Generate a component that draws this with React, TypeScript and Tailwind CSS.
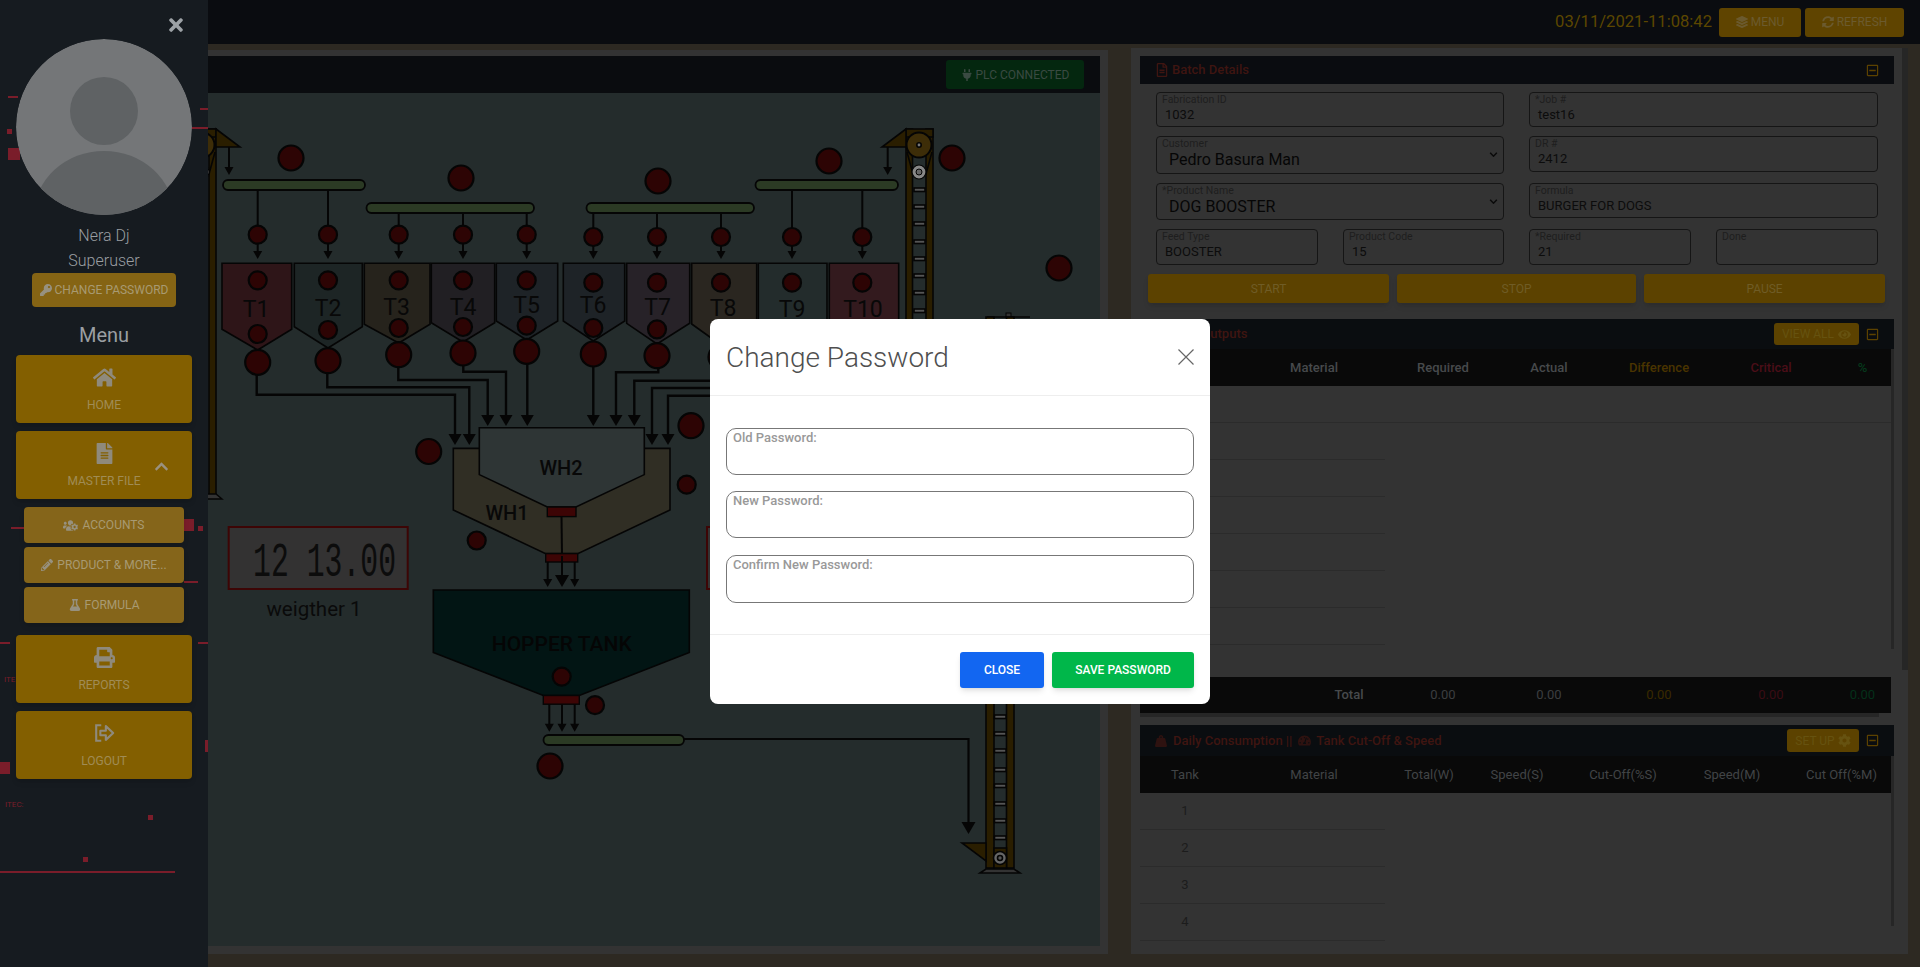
import type { ReactNode } from "react";
import {
  FaCog,
  FaChevronUp,
  FaEye,
  FaFileAlt,
  FaFlask,
  FaHome,
  FaKey,
  FaLayerGroup,
  FaPencilAlt,
  FaPlug,
  FaPrint,
  FaRegFileAlt,
  FaRegMinusSquare,
  FaSyncAlt,
  FaTachometerAlt,
  FaTimes,
  FaUsersCog,
  FaWeightHanging,
} from "react-icons/fa";

const LINE = "#050505";
const RED = "#2d0404";

function Dot({ x, y, r = 9 }: { x: number; y: number; r?: number }) {
  return <circle cx={x} cy={y} r={r} fill={RED} stroke={LINE} strokeWidth={2.2} />;
}

function Arrow({ x, y1, y2, w = 9, h = 8 }: { x: number; y1: number; y2: number; w?: number; h?: number }) {
  return (
    <g>
      <line x1={x} y1={y1} x2={x} y2={y2 - h + 1} stroke={LINE} strokeWidth={2} />
      <polygon points={`${x - w / 2},${y2 - h} ${x + w / 2},${y2 - h} ${x},${y2}`} fill={LINE} />
    </g>
  );
}

function Belt({ x1, x2, y }: { x1: number; x2: number; y: number }) {
  return <rect x={x1} y={y} width={x2 - x1} height={10} rx={5} fill="#2b3a24" stroke={LINE} strokeWidth={1.8} />;
}

function Elevator({ dx, bottom, rungs }: { dx: number; bottom: number; rungs: number[] }) {
  return (
    <g transform={`translate(${dx} 0)`} stroke={LINE} strokeWidth={1.6}>
      <rect x={906} y={129} width={6.5} height={bottom - 129} fill="#2a1e00" />
      <rect x={926} y={129} width={7} height={bottom - 129} fill="#2a1e00" />
      <rect x={906} y={129} width={27} height={8} fill="#2a1e00" />
      <line x1={907} y1={152} x2={913} y2={174} />
      <line x1={932} y1={152} x2={926} y2={174} />
      <circle cx={919} cy={145} r={12.5} fill="#3d2d08" strokeWidth={2} />
      <circle cx={919} cy={145} r={2.2} fill="#777" />
      <circle cx={919} cy={172} r={7} fill="#888" strokeWidth={1.2} />
      <circle cx={919} cy={172} r={3} fill="#666" strokeWidth={1} />
      {rungs.map((y) => (
        <rect key={y} x={914} y={y} width={11} height={3.5} fill="#555" />
      ))}
    </g>
  );
}

const tanks = [
  { name: "T1", x1: 222, x2: 291.7, sh: 329.3, tip: 350, cx: 257.7, fill: "#2e1518", ty: 317, tx: 256, topY: 234.7, inY: 280.3, low: 334, big: 362.3 },
  { name: "T2", x1: 294.3, x2: 362.3, sh: 326.7, tip: 348, cx: 328, fill: "#1d2525", ty: 316, tx: 328, topY: 234.7, inY: 280.3, low: 330, big: 360.7 },
  { name: "T3", x1: 364.3, x2: 430, sh: 324.3, tip: 343, cx: 398.7, fill: "#26231c", ty: 315, tx: 396.7, topY: 234.7, inY: 280.3, low: 328, big: 354.7 },
  { name: "T4", x1: 431.3, x2: 494.7, sh: 322.7, tip: 342, cx: 463, fill: "#211f23", ty: 315, tx: 463, topY: 234.7, inY: 280.3, low: 327, big: 353 },
  { name: "T5", x1: 496.3, x2: 557.7, sh: 321, tip: 340, cx: 526.7, fill: "#1e2327", ty: 313, tx: 526.7, topY: 234.7, inY: 280.3, low: 325.7, big: 351.3 },
  { name: "T6", x1: 563.3, x2: 624.7, sh: 321, tip: 341, cx: 593.3, fill: "#1e2327", ty: 313, tx: 593, topY: 237, inY: 282.7, low: 328, big: 354 },
  { name: "T7", x1: 626.7, x2: 689.7, sh: 323.3, tip: 344, cx: 657, fill: "#272228", ty: 315, tx: 657.7, topY: 237, inY: 282.7, low: 329.3, big: 355.7 },
  { name: "T8", x1: 691.7, x2: 756.7, sh: 324, tip: 345, cx: 721, fill: "#2a2620", ty: 316, tx: 723, topY: 237, inY: 282.7, low: 330, big: 357 },
  { name: "T9", x1: 758.3, x2: 827, sh: 326, tip: 347, cx: 792, fill: "#232c2c", ty: 317, tx: 792, topY: 237, inY: 282.7, low: 332, big: 358 },
  { name: "T10", x1: 829.3, x2: 898.7, sh: 326, tip: 347, cx: 862.3, fill: "#331a1e", ty: 317, tx: 863, topY: 237, inY: 282.7, low: 332, big: 358 },
];

const pipes = [
  "M256.7 374V394.7H455V434",
  "M327.3 373V387.3H469.3V434",
  "M398.3 367V380H487.7V415",
  "M463.3 365V371.7H506V415",
  "M527.3 363V415",
  "M593.3 366V415",
  "M658.3 368V372.3H616V415",
  "M721 380.7H634.3V415",
  "M792 388H652V434",
  "M862 395.7H668V434",
];

const pipeHeads: [number, number][] = [
  [455, 445], [469.3, 445], [487.7, 426], [506, 426], [527.3, 426],
  [593.3, 426], [616, 426], [634.3, 426], [652, 445], [668, 445],
];

function PlantDiagram() {
  return (
    <svg viewBox="208 93 892 853" className="block h-[853px] w-[892px]" fontFamily="Roboto, sans-serif">
      <Elevator dx={-717} bottom={498} rungs={[]} />
      <polygon points="216,129 240,147 216,147" fill="#2a1e00" stroke={LINE} strokeWidth={1.6} />
      <polygon points="206,499 222,499 216,494 206,494" fill="#333" stroke={LINE} strokeWidth={1.4} />
      <Arrow x={229} y1={147} y2={175} />

      <Elevator dx={0} bottom={340} rungs={[188, 205, 222, 240, 257, 274, 291, 309]} />
      <polygon points="906,129 882,147 906,147" fill="#2a1e00" stroke={LINE} strokeWidth={1.6} />
      <Arrow x={887.7} y1={147} y2={175} />

      <Belt x1={223} x2={365} y={180} />
      <Belt x1={366.5} x2={534} y={203} />
      <Belt x1={586.5} x2={754} y={203} />
      <Belt x1={755.5} x2={898} y={180} />

      {tanks.map((t) => {
        const beltY = ["T1", "T2", "T9", "T10"].includes(t.name) ? 190 : 213;
        return (
          <g key={t.name}>
            <line x1={t.cx} y1={beltY} x2={t.cx} y2={t.topY} stroke={LINE} strokeWidth={2} />
            <Dot x={t.cx} y={t.topY} />
            <Arrow x={t.cx} y1={t.topY + 9} y2={259} />
            <polygon
              points={`${t.x1},263.3 ${t.x2},263.3 ${t.x2},${t.sh} ${t.cx},${t.tip} ${t.x1},${t.sh}`}
              fill={t.fill}
              stroke={LINE}
              strokeWidth={1.6}
            />
            <Dot x={t.cx} y={t.inY} />
            <text x={t.tx} y={t.ty} textAnchor="middle" fontSize={23} fill="#080808">
              {t.name}
            </text>
          </g>
        );
      })}
      {tanks.map((t) => (
        <g key={t.name}>
          <Dot x={t.cx} y={t.low} />
          <Dot x={t.cx} y={t.big} r={12.5} />
        </g>
      ))}

      {pipes.map((d) => (
        <path key={d} d={d} fill="none" stroke={LINE} strokeWidth={2.4} />
      ))}
      {pipeHeads.map(([x, y]) => (
        <polygon key={x} points={`${x - 6.5},${y - 11} ${x + 6.5},${y - 11} ${x},${y}`} fill={LINE} />
      ))}

      <Dot x={291} y={158} r={12.5} />
      <Dot x={461} y={178} r={12.5} />
      <Dot x={658} y={181} r={12.5} />
      <Dot x={829} y={161} r={12.5} />
      <Dot x={952} y={158} r={12.5} />
      <Dot x={1059} y={268} r={12.5} />
      <Dot x={691} y={425.7} r={12.5} />
      <Dot x={428.7} y={451.5} r={12.5} />
      <Dot x={476.7} y={540.5} />
      <Dot x={686.7} y={484.7} />

      <polygon
        points="453.3,448.4 670,448.4 670,510 577.7,553.6 545.7,553.6 453.3,510"
        fill="#302e24"
        stroke={LINE}
        strokeWidth={1.6}
      />
      <polygon
        points="479.3,427.7 644.3,427.7 644.3,474.6 576,507 547.3,507 479.3,474.6"
        fill="#2e3535"
        stroke={LINE}
        strokeWidth={1.6}
      />
      <text x={561} y={475} textAnchor="middle" fontSize={20} fontWeight={500} fill="#080808">
        WH2
      </text>
      <text x={507} y={520} textAnchor="middle" fontSize={20} fontWeight={500} fill="#080808">
        WH1
      </text>
      <rect x={547.3} y={507} width={28.7} height={9.6} fill="#3d0505" stroke={LINE} strokeWidth={1.4} />
      <line x1={561.5} y1={516} x2={562} y2={556} stroke={LINE} strokeWidth={2} />
      <rect x={545.7} y={553.6} width={32} height={8.4} fill="#3d0505" stroke={LINE} strokeWidth={1.4} />
      <Arrow x={547.7} y1={562} y2={587} />
      <Arrow x={562} y1={556} y2={587} w={14} h={12} />
      <Arrow x={574.7} y1={562} y2={587} />

      <polygon
        points="433.3,590 689.3,590 689.3,652.4 579.3,695.5 543.3,695.5 433.3,652.4"
        fill="#021514"
        stroke={LINE}
        strokeWidth={1.6}
      />
      <text x={561.7} y={651} textAnchor="middle" fontSize={21} fontWeight={500} fill="#050505">
        HOPPER TANK
      </text>
      <Dot x={561.7} y={676.6} />
      <rect x={543.3} y={695.5} width={36} height={8.7} fill="#3d0505" stroke={LINE} strokeWidth={1.4} />
      <Dot x={595} y={705.2} />
      <Arrow x={549.3} y1={704} y2={731.8} />
      <Arrow x={562} y1={704} y2={731.8} />
      <Arrow x={574.7} y1={704} y2={731.8} />
      <Belt x1={543.5} x2={684} y={735} />
      <Dot x={550} y={766} r={12.5} />
      <path d="M684 739H968.5V824" fill="none" stroke={LINE} strokeWidth={2.2} />
      <polygon points="961.5,822 975.5,822 968.5,834" fill={LINE} />

      <rect x={228.7} y={527} width={179} height={62} fill="#333232" stroke="#3d0505" strokeWidth={2} />
      <text x={253} y={576} fontSize={48} fontFamily="'Liberation Mono', monospace" fill="#0c0c0c" textLength={143} lengthAdjust="spacingAndGlyphs">
        12 13.00
      </text>
      <text x={314} y={616} textAnchor="middle" fontSize={20.5} fill="#0a0a0a">
        weigther 1
      </text>
      <rect x={707} y={527} width={60} height={62} fill="#333232" stroke="#3d0505" strokeWidth={2} />

      <line x1={987} y1={317} x2={1030} y2={317} stroke={LINE} strokeWidth={1.6} />
      <rect x={1006} y={313} width={5} height={4} fill="#333" stroke={LINE} strokeWidth={1} />
      <g stroke={LINE} strokeWidth={1.6}>
        <rect x={986} y={317} width={8} height={551} fill="#2a1e00" />
        <rect x={1006.5} y={317} width={7.5} height={551} fill="#2a1e00" />
        {[715, 732, 749, 768, 784, 802, 819, 836].map((y) => (
          <rect key={y} x={994.5} y={y} width={11.5} height={3.5} fill="#555" />
        ))}
        <polygon points="962,843 986,843 986,861" fill="#2a1e00" />
        <rect x={994} y={848} width={12.5} height={20} fill="#2a1e00" />
        <circle cx={1000} cy={858} r={6.5} fill="#666" />
        <circle cx={1000} cy={858} r={2.5} fill="#555" />
        <polygon points="980,873 986,869 1014,869 1020,873" fill="#333" />
      </g>
    </svg>
  );
}

function SideBacking() {
  return (
    <svg viewBox="0 0 208 967" className="absolute inset-0 h-[967px] w-[208px]" fontFamily="Roboto, sans-serif">
      <g fill="#7a1d2a">
        <rect x={8} y={96} width={10} height={2} />
        <rect x={200} y={108} width={8} height={2} />
        <rect x={188} y={127} width={20} height={2} />
        <rect x={7} y={129} width={5} height={5} />
        <rect x={8} y={148} width={12} height={12} />
        <rect x={11} y={527} width={13} height={2} />
        <rect x={184} y={519} width={10} height={12} />
        <rect x={198} y={526} width={5} height={5} />
        <rect x={184} y={581} width={14} height={2} />
        <rect x={0} y={642} width={10} height={2} />
        <rect x={198} y={642} width={10} height={2} />
        <rect x={205} y={740} width={3} height={12} />
        <rect x={0} y={762} width={10} height={12} />
        <rect x={148} y={815} width={5} height={5} />
        <rect x={83} y={857} width={5} height={5} />
        <rect x={0} y={871} width={175} height={2} />
        <text x={4} y={682} fontSize={8}>ITEC</text>
        <text x={5} y={807} fontSize={8}>ITEC:</text>
      </g>
    </svg>
  );
}

function Avatar() {
  return (
    <svg viewBox="0 0 176 176" className="block h-[176px] w-[176px] rounded-full">
      <circle cx={88} cy={88} r={88} fill="#747678" />
      <circle cx={88} cy={72} r={34} fill="#5f6264" />
      <ellipse cx={88} cy={176} rx={70} ry={64} fill="#5f6264" />
    </svg>
  );
}

function MenuButton({ icon, label, children }: { icon: ReactNode; label: string; children?: ReactNode }) {
  return (
    <div className="relative flex h-[68px] w-[176px] flex-col items-center rounded-[4px] bg-[#835f00] pt-[10px] text-[#a08c55] shadow-md">
      <span className="flex h-[24px] items-center text-[#8f8a7c]">{icon}</span>
      <span className="mt-[9px] text-[12px] leading-[14px]">{label}</span>
      {children}
    </div>
  );
}

function SubButton({ icon, label }: { icon: ReactNode; label: string }) {
  return (
    <div className="flex h-[36px] w-[160px] items-center justify-center gap-[4px] rounded-[4px] bg-[#85651a] text-[12px] text-[#a89a72] shadow-md">
      <span className="text-[#97917f]">{icon}</span>
      {label}
    </div>
  );
}

function LogoutIcon() {
  return (
    <svg viewBox="0 0 24 24" className="h-[22px] w-[22px]" fill="none" stroke="currentColor" strokeWidth={2.3}>
      <path d="M9 3.5H3.5V20.5H9" />
      <path d="M8 9.5H14V4.5L22 12L14 19.5V14.5H8Z" strokeLinejoin="round" />
    </svg>
  );
}

function Sidebar() {
  return (
    <aside className="relative flex h-full w-[208px] shrink-0 flex-col items-center bg-[#161b20]">
      <SideBacking />
      <FaTimes className="absolute left-[167px] top-[15px] h-[20px] w-[18px] text-[#9da2a6]" />
      <div className="relative mt-[39px] flex flex-col items-center">
        <Avatar />
        <p className="mt-[8px] text-[16px] font-light leading-[25px] text-[#9a9ea2]">Nera Dj</p>
        <p className="text-[16px] font-light leading-[25px] text-[#9a9ea2]">Superuser</p>
        <div className="flex h-[34px] w-[144px] items-center justify-center gap-[3px] rounded-[4px] bg-[#856414] text-[12px] text-[#a89a72]">
          <FaKey className="text-[#97917f]" size={12} />
          CHANGE PASSWORD
        </div>
        <p className="mb-[6px] mt-[14px] text-[20px] leading-[28px] text-[#9a9ea2]">Menu</p>
        <div className="flex flex-col items-center gap-[8px]">
          <MenuButton icon={<FaHome size={23} />} label="HOME" />
          <MenuButton icon={<FaFileAlt size={21} />} label="MASTER FILE">
            <FaChevronUp className="absolute left-[138px] top-[28px] text-[#9a9280]" size={15} />
          </MenuButton>
        </div>
        <div className="mt-[8px] flex flex-col items-center gap-[4px]">
          <SubButton icon={<FaUsersCog size={15} />} label="ACCOUNTS" />
          <SubButton icon={<FaPencilAlt size={12} />} label="PRODUCT & MORE..." />
          <SubButton icon={<FaFlask size={12} />} label="FORMULA" />
        </div>
        <div className="mt-[12px] flex flex-col items-center gap-[8px]">
          <MenuButton icon={<FaPrint size={21} />} label="REPORTS" />
          <MenuButton icon={<LogoutIcon />} label="LOGOUT" />
        </div>
      </div>
    </aside>
  );
}

function TopBar() {
  return (
    <header className="flex h-[44px] items-center justify-end gap-[4px] bg-[#0a0c10] pr-[16px]">
      <span className="mr-[3px] text-[16.6px] leading-[24px] text-[#5c4700]">03/11/2021-11:08:42</span>
      <div className="flex h-[29px] w-[82px] items-center justify-center gap-[3px] rounded-[3px] bg-[#5f4400] text-[12px] text-[#6b5a2e]">
        <FaLayerGroup size={12} />
        MENU
      </div>
      <div className="flex h-[29px] w-[99px] items-center justify-center gap-[3px] rounded-[3px] bg-[#5f4400] text-[12px] text-[#6b5a2e]">
        <FaSyncAlt size={12} />
        REFRESH
      </div>
    </header>
  );
}

function Field({ label, value, big, arrow, box }: { label: string; value?: string; big?: boolean; arrow?: boolean; box: string }) {
  return (
    <div className={`relative rounded-[4px] border border-[#151515] pl-[5px] ${box}`}>
      <p className="text-[10.5px] leading-[13px] text-[#1e1e1e]">{label}</p>
      <p className={big ? "pl-[7px] text-[16px] leading-[19px] text-[#060606]" : "pl-[3px] text-[13px] leading-[17px] text-[#0c0c0c]"}>
        {value}
      </p>
      {arrow && (
        <svg viewBox="0 0 10 6" className="absolute right-[5px] top-[15px] h-[5px] w-[9px]" fill="none" stroke="#0a0a0a" strokeWidth={1.8}>
          <path d="M1 1L5 5L9 1" />
        </svg>
      )}
    </div>
  );
}

function BatchDetails() {
  return (
    <section>
      <div className="flex h-[28px] w-[754px] items-center justify-between bg-[#0a0c10] pl-[15px] pr-[15px] text-[#3f1511]">
        <span className="flex items-center gap-[3px] text-[13px] font-medium">
          <FaRegFileAlt size={14} />
          Batch Details
        </span>
        <FaRegMinusSquare size={13} className="text-[#5c4200]" />
      </div>
      <div className="ml-[16px] mt-[8px] grid w-[722px] grid-cols-[348px_349px] gap-x-[25px]">
        <Field box="h-[35px]" label="Fabrication ID" value="1032" />
        <Field box="h-[35px]" label="*Job #" value="test16" />
        <Field box="mt-[9px] h-[38px]" label="Customer" value="Pedro Basura Man" big arrow />
        <Field box="mt-[9px] h-[36px]" label="DR #" value="2412" />
        <Field box="mt-[9px] h-[37px]" label="*Product Name" value="DOG BOOSTER" big arrow />
        <Field box="mt-[9px] h-[35px]" label="Formula" value="BURGER FOR DOGS" />
        <div className="mt-[9px] grid grid-cols-[162px_161px] gap-x-[25px]">
          <Field box="h-[36px]" label="Feed Type" value="BOOSTER" />
          <Field box="h-[36px]" label="Product Code" value="15" />
        </div>
        <div className="mt-[9px] grid grid-cols-[162px_162px] gap-x-[25px]">
          <Field box="h-[36px]" label="*Required" value="21" />
          <Field box="h-[36px]" label="Done" />
        </div>
      </div>
      <div className="ml-[8px] mt-[9px] grid w-[738px] grid-cols-[241px_239px_241px] gap-x-[8px]">
        {["START", "STOP", "PAUSE"].map((b) => (
          <div key={b} className="flex h-[29px] items-center justify-center rounded-[3px] bg-[#5c4200] text-[12px] text-[#6f5c26] shadow-md">
            {b}
          </div>
        ))}
      </div>
    </section>
  );
}

const outCols = "grid-cols-[90px_168px_90px_122px_98px_126px_57px]";
const useCols = "grid-cols-[90px_168px_62px_114px_98px_120px_99px]";

function Rows({ count, labels }: { count: number; labels?: string[] }) {
  return (
    <>
      {Array.from({ length: count }).map((_, i) => (
        <div key={i} className={`flex h-[37px] items-center justify-start border-b border-[#2b2b2b] text-[13px] text-[#1c1c1c] ${i === 0 && !labels ? "w-[751px]" : "w-[245px]"}`}>
          <span className="w-[90px] shrink-0 text-center">{labels?.[i]}</span>
        </div>
      ))}
    </>
  );
}

function OutputsTable() {
  return (
    <section className="relative mt-[16px] w-[754px]">
      <div className="flex h-[30px] items-center justify-between bg-[#0a0d10] pl-[30px] pr-[15px] text-[#3f1511]">
        <span className="text-[13px] font-medium">Tank Outputs</span>
        <div className="flex items-center gap-[7px]">
          <div className="flex h-[22px] w-[85px] items-center justify-center gap-[4px] rounded-[3px] bg-[#5c4200] text-[12px] text-[#665210]">
            VIEW ALL
            <FaEye size={13} />
          </div>
          <FaRegMinusSquare size={13} className="text-[#5c4200]" />
        </div>
      </div>
      <div className="absolute left-[751px] top-[30px] h-[300px] w-[3px] bg-[#262626]" />
      <div className={`grid h-[37px] w-[751px] items-center bg-[#090909] text-center text-[13px] font-medium text-[#474a4c] ${outCols}`}>
        <span>Tank</span>
        <span>Material</span>
        <span>Required</span>
        <span>Actual</span>
        <span className="text-[#4a3400]">Difference</span>
        <span className="text-[#4b0e18]">Critical</span>
        <span className="text-[#053a1c]">%</span>
      </div>
      <div className="h-[291px] overflow-hidden">
        <Rows count={8} />
      </div>
      <div className={`grid h-[36px] w-[751px] items-center bg-[#090909] text-center text-[13px] text-[#3c3e40] ${outCols}`}>
        <span />
        <span className="pl-[70px] font-medium text-[#474a4c]">Total</span>
        <span>0.00</span>
        <span>0.00</span>
        <span className="text-[#3a2900]">0.00</span>
        <span className="text-[#3a0c14]">0.00</span>
        <span className="text-[#04301a]">0.00</span>
      </div>
      <div className="h-[4px] w-[739px] bg-[#262626]" />
    </section>
  );
}

function ConsumptionTable() {
  return (
    <section className="relative mt-[8px] w-[754px]">
      <div className="flex h-[31px] items-center justify-between bg-[#0a0d10] pl-[15px] pr-[15px] text-[#3f1511]">
        <span className="flex items-center text-[13px] font-medium">
          <FaWeightHanging size={12} className="mr-[6px] text-[#2e1210]" />
          Daily Consumption ||
          <FaTachometerAlt size={13} className="ml-[6px] mr-[5px] text-[#2e1210]" />
          Tank Cut-Off &amp; Speed
        </span>
        <div className="flex items-center gap-[7px]">
          <div className="flex h-[23px] w-[72px] items-center justify-center gap-[3px] rounded-[3px] bg-[#5c4200] text-[12px] text-[#665210]">
            SET UP
            <FaCog size={13} />
          </div>
          <FaRegMinusSquare size={13} className="text-[#5c4200]" />
        </div>
      </div>
      <div className="absolute left-[751px] top-[31px] h-[170px] w-[3px] bg-[#262626]" />
      <div className={`grid h-[37px] w-[751px] items-center bg-[#090909] text-center text-[13px] text-[#414446] ${useCols}`}>
        <span>Tank</span>
        <span>Material</span>
        <span>Total(W)</span>
        <span>Speed(S)</span>
        <span>Cut-Off(%S)</span>
        <span>Speed(M)</span>
        <span>Cut Off(%M)</span>
      </div>
      <div className="h-[161px] overflow-hidden">
        <Rows count={5} labels={["1", "2", "3", "4", ""]} />
      </div>
    </section>
  );
}

function ChangePasswordModal() {
  const inputs = [
    { label: "Old Password:", box: "h-[47px]" },
    { label: "New Password:", box: "mt-[16px] h-[47px]" },
    { label: "Confirm New Password:", box: "mt-[17px] h-[48px]" },
  ];
  return (
    <div className="absolute inset-0 flex justify-center pt-[319px]">
      <div className="h-[385px] w-[500px] rounded-[8px] bg-white">
        <div className="flex h-[77px] items-center justify-between border-b border-[#eeeeee] pl-[16px] pr-[16px]">
          <h5 className="pt-[1px] text-[28px] font-light leading-[34px] text-[#4f4f4f]">Change Password</h5>
          <svg viewBox="0 0 16 16" className="h-[16px] w-[16px]" stroke="#666" strokeWidth={1.2}>
            <path d="M0.5 0.5L15.5 15.5M15.5 0.5L0.5 15.5" />
          </svg>
        </div>
        <div className="h-[239px] border-b border-[#eeeeee] pl-[16px] pr-[16px] pt-[32px]">
          {inputs.map((f) => (
            <div key={f.label} className={`rounded-[10px] border border-[#777777] pl-[6px] pt-[1px] ${f.box}`}>
              <p className="text-[13px] font-medium leading-[15px] text-[#999999]">{f.label}</p>
            </div>
          ))}
        </div>
        <div className="flex justify-end gap-[8px] pr-[16px] pt-[17px]">
          <div className="flex h-[36px] w-[84px] items-center justify-center rounded-[3px] bg-[#1266f1] text-[12px] font-medium text-white shadow-md">
            CLOSE
          </div>
          <div className="flex h-[36px] w-[142px] items-center justify-center rounded-[3px] bg-[#00b74a] text-[12px] font-medium text-white shadow-md">
            SAVE PASSWORD
          </div>
        </div>
      </div>
    </div>
  );
}

export default function App() {
  return (
    <div className="relative flex h-[967px] w-[1920px] overflow-hidden bg-[#2d2922] [font-family:Roboto,sans-serif]">
      <Sidebar />
      <main className="flex min-w-0 flex-1 flex-col">
        <TopBar />
        <div className="flex flex-1 items-start">
          <div className="mt-[6px] h-[904px] w-[900px] bg-[#333333] pr-[8px] pt-[6px]">
            <div className="flex h-[37px] items-center justify-end bg-[#0a0c0f] pr-[16px]">
              <div className="flex h-[29px] w-[138px] items-center justify-center gap-[3px] rounded-[3px] bg-[#04270f] text-[12px] text-[#3a4a42]">
                <FaPlug size={12} />
                PLC CONNECTED
              </div>
            </div>
            <div className="h-[853px] bg-[#242c2c]">
              <PlantDiagram />
            </div>
          </div>
          <div className="relative ml-[23px] mt-[4px] h-[906px] w-[777px] overflow-hidden bg-[#333333] pl-[9px] pt-[8px]">
            <div className="absolute left-[771px] top-0 h-[622px] w-[6px] bg-[#262626]" />
            <BatchDetails />
            <OutputsTable />
            <ConsumptionTable />
          </div>
        </div>
      </main>
      <ChangePasswordModal />
    </div>
  );
}
